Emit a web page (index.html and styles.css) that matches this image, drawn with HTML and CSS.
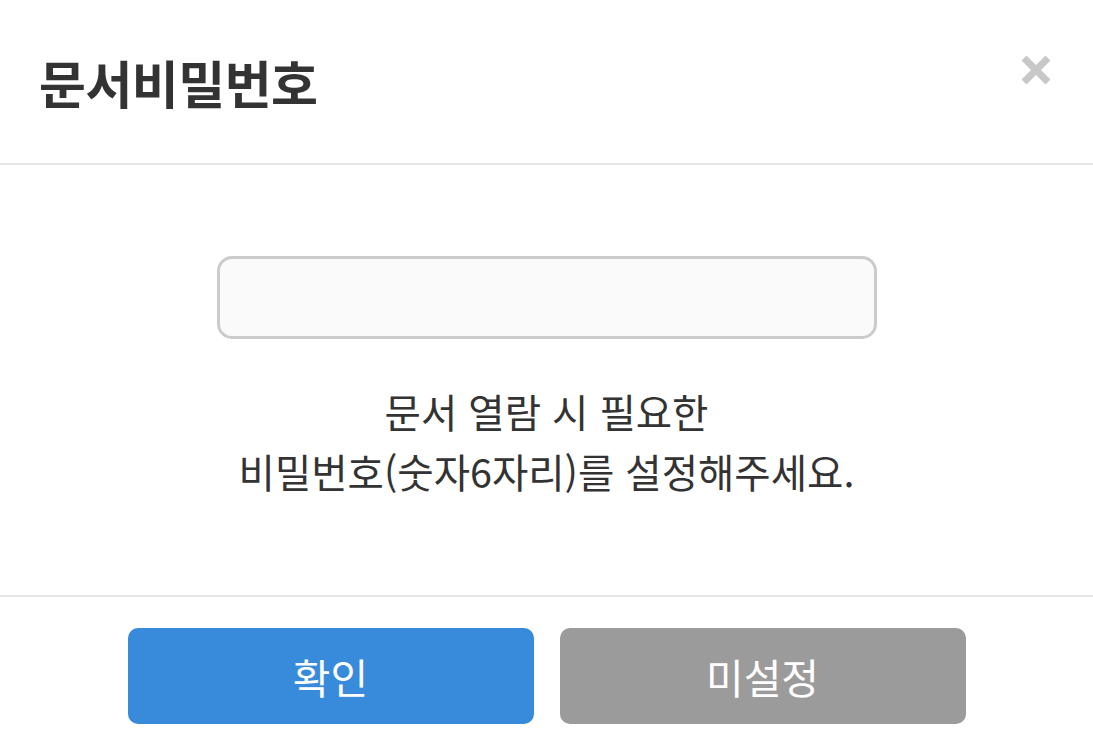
FILE: index.html
```html
<!DOCTYPE html>
<html lang="ko">
<head>
<meta charset="utf-8">
<title>문서비밀번호</title>
<link rel="stylesheet" href="styles.css">
</head>
<body>
<div class="dialog">
  <header class="dialog-header">
    <h1 class="dialog-title">문서비밀번호</h1>
    <button class="close-btn" aria-label="닫기">
      <svg width="32" height="32" viewBox="0 0 32 32">
        <path d="M4 4 L28 28 M28 4 L4 28" stroke="#c8c8c8" stroke-width="7" stroke-linecap="butt"/>
      </svg>
    </button>
  </header>
  <main class="dialog-body">
    <input class="pw-input" type="password" maxlength="6">
    <p class="pw-desc">문서 열람 시 필요한<br>비밀번호(숫자6자리)를 설정해주세요.</p>
  </main>
  <footer class="dialog-footer">
    <button class="btn btn-primary">확인</button>
    <button class="btn btn-secondary">미설정</button>
  </footer>
</div>
</body>
</html>
```
FILE: styles.css
```css
html, body {
  margin: 0;
  padding: 0;
  background: #ffffff;
}
body {
  font-family: "Noto Sans CJK KR", "Noto Sans", sans-serif;
  color: #333333;
}
.dialog {
  width: 1093px;
  height: 752px;
  display: flex;
  flex-direction: column;
}
.dialog-header {
  height: 163px;
  border-bottom: 2px solid #e6e6e6;
  display: flex;
  align-items: center;
  justify-content: space-between;
  padding: 0 41px 0 39px;
  box-sizing: content-box;
}
.dialog-title {
  margin: 0;
  font-size: 51px;
  font-weight: 700;
  line-height: 64px;
  color: #333333;
  letter-spacing: -0.5px;
}
.close-btn {
  align-self: flex-start;
  margin-top: 54px;
  border: 0;
  padding: 0;
  background: none;
  width: 32px;
  height: 32px;
  display: block;
}
.close-btn svg {
  display: block;
}
.dialog-body {
  height: 432px;
  border-bottom: 2px solid #e6e6e6;
  display: flex;
  flex-direction: column;
  align-items: center;
  padding-top: 91px;
  box-sizing: border-box;
}
.pw-input {
  width: 660px;
  height: 83px;
  box-sizing: border-box;
  border: 3px solid #cbcbcb;
  border-radius: 15px;
  background: #fafafa;
  margin: 0 0 0 1px;
  outline: none;
}
.pw-desc {
  margin: 42px 0 0;
  font-size: 39.5px;
  line-height: 60px;
  text-align: center;
  color: #333333;
}
.dialog-footer {
  display: flex;
  justify-content: center;
  gap: 26px;
  padding-top: 31px;
}
.btn {
  width: 406px;
  height: 96px;
  border: 0;
  border-radius: 10px;
  color: #ffffff;
  font-family: "Noto Sans CJK KR", "Noto Sans", sans-serif;
  font-size: 41px;
  padding: 0;
}
.btn-primary {
  background: #388adb;
}
.btn-secondary {
  background: #9b9b9b;
}
```
